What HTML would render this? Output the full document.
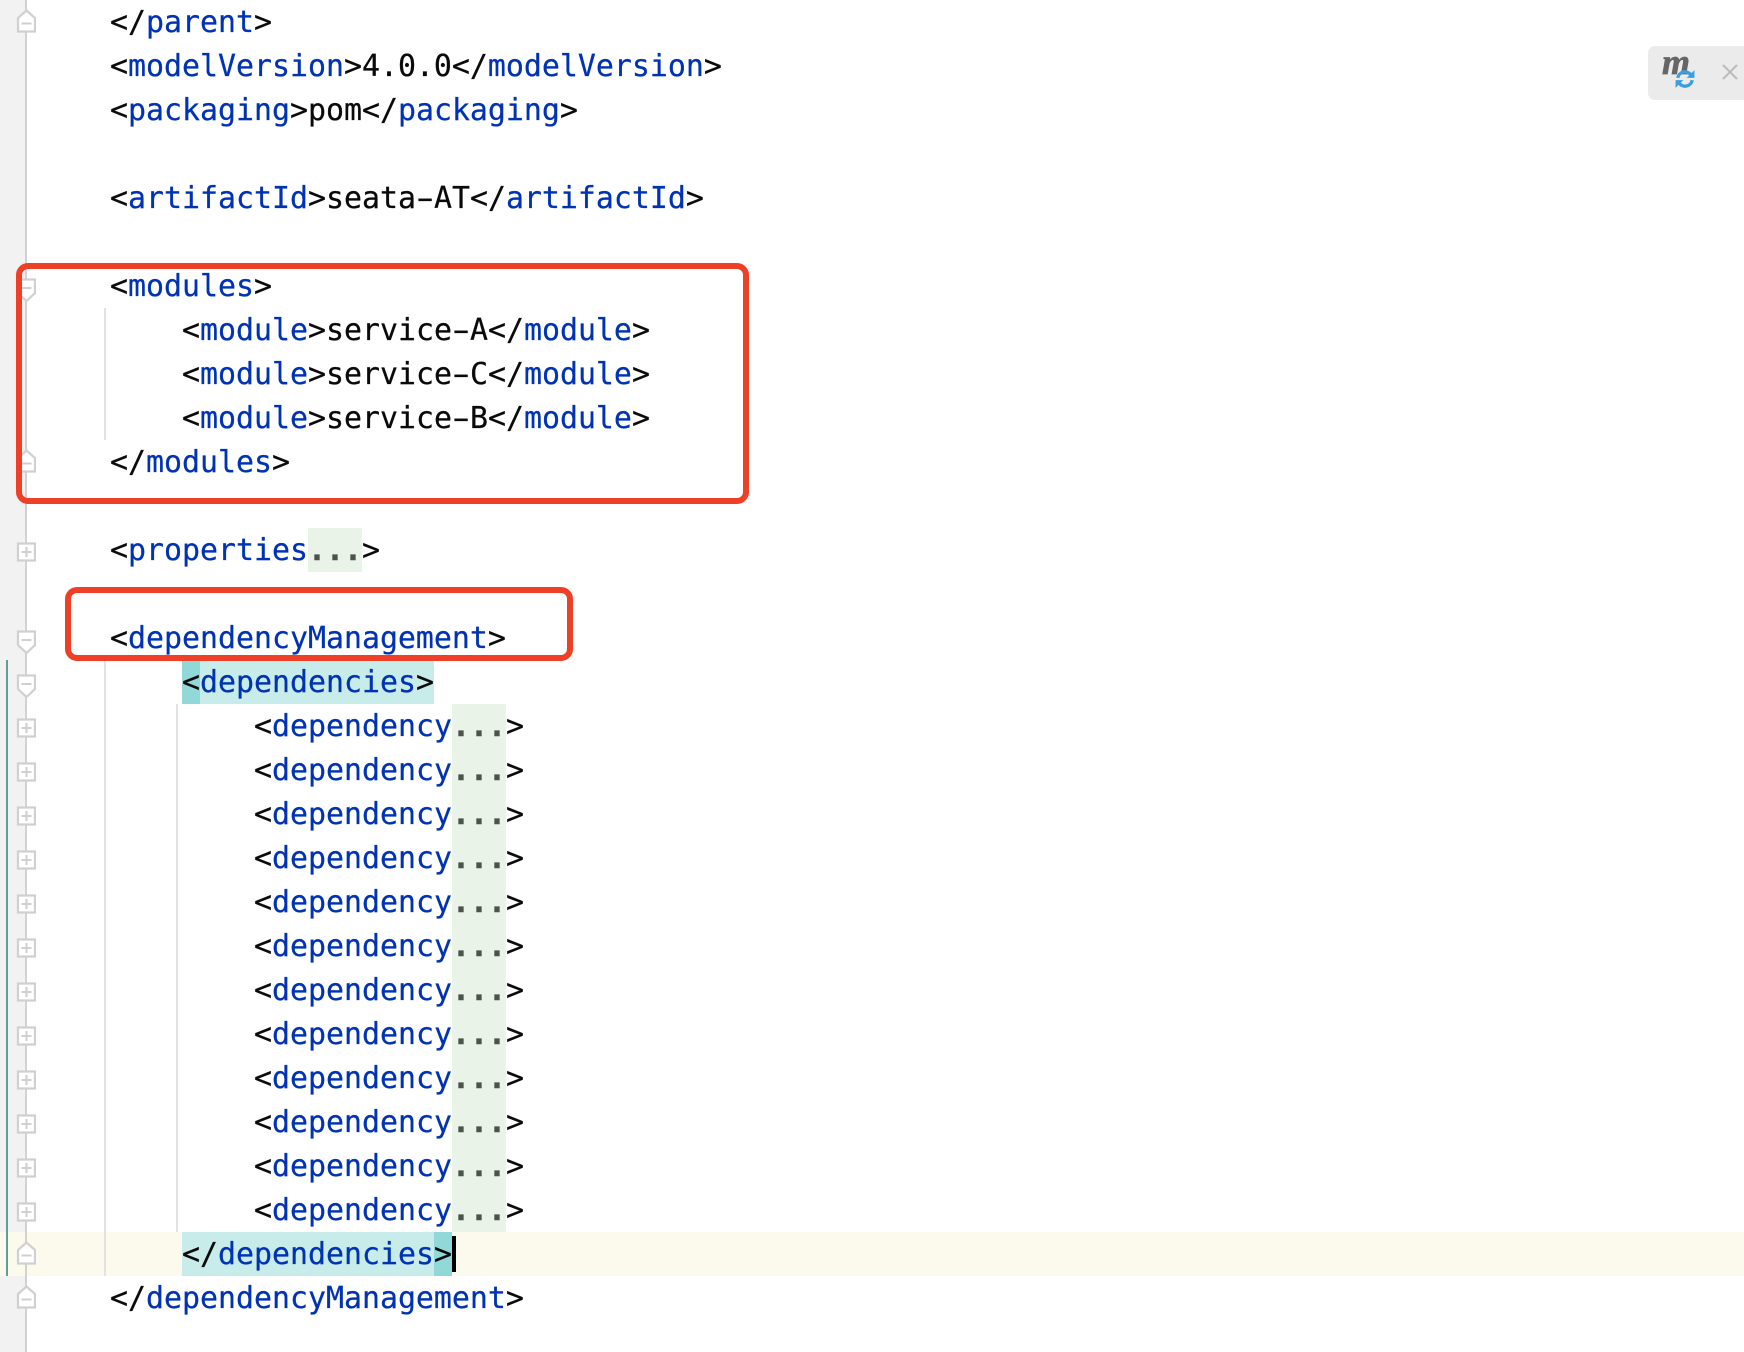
<!DOCTYPE html>
<html><head><meta charset="utf-8"><style>
html,body{margin:0;padding:0;background:#fff;width:1744px;height:1352px;overflow:hidden}
#g{position:absolute;left:0;top:0;width:25px;height:1352px;background:#f2f2f2}
#l{position:absolute;left:25px;top:0;width:2px;height:1352px;background:#d2d2d2;z-index:2}
.b{position:absolute}
.r{position:absolute;left:110px;height:44px;margin-top:1px;font:29.9px/44px "DejaVu Sans Mono","Liberation Mono",monospace;color:#0a0a0a;white-space:pre;z-index:4;-webkit-text-stroke:.25px currentColor}
.r b{font-weight:normal;color:#0033b3}
.r i{font-style:normal;font-weight:bold;color:#4a554a;-webkit-text-stroke:.5px #4a554a}
.r u{text-decoration:none;display:inline-block;transform:scaleX(1.7)}
.i1{left:182px}.i2{left:254px}
.g{position:absolute;width:2px;background:#e2e2e2;z-index:1}
.f{position:absolute;background:#e9f3e8;width:54px;height:44px;z-index:1}
svg.m{position:absolute;left:15.500px;width:20px;height:44px;z-index:3}
.box{position:absolute;border:6px solid #ee4027;border-radius:12px;box-sizing:border-box;z-index:5}
</style></head><body>
<svg width="0" height="0" style="position:absolute"><defs>
<symbol id="p" viewBox="0 0 20 44"><path fill="#fff" stroke="#d0d0d0" stroke-width="2.200" d="M2 15.500H19V32.500H2Z"/><path fill="none" stroke="#d0d0d0" stroke-width="2" d="M10.500 19V29M5.500 24H15.500"/></symbol>
<symbol id="e" viewBox="0 0 20 44"><path fill="#fff" stroke="#d0d0d0" stroke-width="2.200" d="M2 31.500V18L10.500 10.500L19 18V31.500Z"/><path fill="none" stroke="#d0d0d0" stroke-width="2" d="M5.500 23.500H15.500"/></symbol>
<symbol id="s" viewBox="0 0 20 44"><path fill="#fff" stroke="#d0d0d0" stroke-width="2.200" d="M2 15.500V29L10.500 37L19 29V15.500Z"/><path fill="none" stroke="#d0d0d0" stroke-width="2" d="M5.500 24H15.500"/></symbol>
</defs></svg>
<div id="g"></div>
<div class="b" style="left:0;top:1232px;width:1744px;height:44px;background:#fbfaed"></div>
<div id="l"></div>
<div class="b" style="left:6px;top:660px;width:2px;height:616px;background:#5f9e9a;z-index:2"></div>
<div class="g" style="left:104px;top:308px;height:132px"></div>
<div class="g" style="left:104px;top:660px;height:616px"></div>
<div class="g" style="left:176px;top:704px;height:528px"></div>

<div class="b" style="left:182px;top:660px;width:252px;height:44px;background:#c8ecea"></div>
<div class="b" style="left:182px;top:660px;width:18px;height:44px;background:#91d8d8"></div>
<div class="b" style="left:182px;top:1232px;width:270px;height:44px;background:#c8ecea"></div>
<div class="b" style="left:434px;top:1232px;width:18px;height:44px;background:#91d8d8"></div>
<div class="b" style="left:452px;top:1236px;width:4px;height:36px;background:#000;z-index:6"></div>

<div class="f" style="left:308px;top:528px"></div>
<div class="f" style="left:452px;top:704px;height:528px"></div>

<svg class="m" style="top:0"><use href="#e"/></svg>
<svg class="m" style="top:264px"><use href="#s"/></svg>
<svg class="m" style="top:440px"><use href="#e"/></svg>
<svg class="m" style="top:528px"><use href="#p"/></svg>
<svg class="m" style="top:616px"><use href="#s"/></svg>
<svg class="m" style="top:660px"><use href="#s"/></svg>
<svg class="m" style="top:704px"><use href="#p"/></svg>
<svg class="m" style="top:748px"><use href="#p"/></svg>
<svg class="m" style="top:792px"><use href="#p"/></svg>
<svg class="m" style="top:836px"><use href="#p"/></svg>
<svg class="m" style="top:880px"><use href="#p"/></svg>
<svg class="m" style="top:924px"><use href="#p"/></svg>
<svg class="m" style="top:968px"><use href="#p"/></svg>
<svg class="m" style="top:1012px"><use href="#p"/></svg>
<svg class="m" style="top:1056px"><use href="#p"/></svg>
<svg class="m" style="top:1100px"><use href="#p"/></svg>
<svg class="m" style="top:1144px"><use href="#p"/></svg>
<svg class="m" style="top:1188px"><use href="#p"/></svg>
<svg class="m" style="top:1232px"><use href="#e"/></svg>
<svg class="m" style="top:1276px"><use href="#e"/></svg>

<div class="r" style="top:0">&lt;/<b>parent</b>&gt;</div>
<div class="r" style="top:44px">&lt;<b>modelVersion</b>&gt;4.0.0&lt;/<b>modelVersion</b>&gt;</div>
<div class="r" style="top:88px">&lt;<b>packaging</b>&gt;pom&lt;/<b>packaging</b>&gt;</div>
<div class="r" style="top:176px">&lt;<b>artifactId</b>&gt;seata<u>-</u>AT&lt;/<b>artifactId</b>&gt;</div>
<div class="r" style="top:264px">&lt;<b>modules</b>&gt;</div>
<div class="r i1" style="top:308px">&lt;<b>module</b>&gt;service<u>-</u>A&lt;/<b>module</b>&gt;</div>
<div class="r i1" style="top:352px">&lt;<b>module</b>&gt;service<u>-</u>C&lt;/<b>module</b>&gt;</div>
<div class="r i1" style="top:396px">&lt;<b>module</b>&gt;service<u>-</u>B&lt;/<b>module</b>&gt;</div>
<div class="r" style="top:440px">&lt;/<b>modules</b>&gt;</div>
<div class="r" style="top:528px">&lt;<b>properties</b><i>...</i>&gt;</div>
<div class="r" style="top:616px">&lt;<b>dependencyManagement</b>&gt;</div>
<div class="r i1" style="top:660px">&lt;<b>dependencies</b>&gt;</div>
<div class="r i2" style="top:704px">&lt;<b>dependency</b><i>...</i>&gt;</div>
<div class="r i2" style="top:748px">&lt;<b>dependency</b><i>...</i>&gt;</div>
<div class="r i2" style="top:792px">&lt;<b>dependency</b><i>...</i>&gt;</div>
<div class="r i2" style="top:836px">&lt;<b>dependency</b><i>...</i>&gt;</div>
<div class="r i2" style="top:880px">&lt;<b>dependency</b><i>...</i>&gt;</div>
<div class="r i2" style="top:924px">&lt;<b>dependency</b><i>...</i>&gt;</div>
<div class="r i2" style="top:968px">&lt;<b>dependency</b><i>...</i>&gt;</div>
<div class="r i2" style="top:1012px">&lt;<b>dependency</b><i>...</i>&gt;</div>
<div class="r i2" style="top:1056px">&lt;<b>dependency</b><i>...</i>&gt;</div>
<div class="r i2" style="top:1100px">&lt;<b>dependency</b><i>...</i>&gt;</div>
<div class="r i2" style="top:1144px">&lt;<b>dependency</b><i>...</i>&gt;</div>
<div class="r i2" style="top:1188px">&lt;<b>dependency</b><i>...</i>&gt;</div>
<div class="r i1" style="top:1232px">&lt;/<b>dependencies</b>&gt;</div>
<div class="r" style="top:1276px">&lt;/<b>dependencyManagement</b>&gt;</div>

<div class="box" style="left:16px;top:263px;width:733px;height:241px"></div>
<div class="box" style="left:65px;top:587px;width:508px;height:74px"></div>

<div class="b" style="left:1648px;top:46px;width:96px;height:54px;background:#ebebeb;border-radius:7px 0 0 7px"></div>
<div class="b" style="left:1662px;top:42px;font:italic bold 36px/40px 'Liberation Serif',serif;color:#666;-webkit-text-stroke:.7px #666">m</div>
<svg class="b" style="left:1675px;top:69px" width="20" height="20" viewBox="0 0 18 18" fill="none" stroke="#3a9fdc" stroke-width="3">
<path d="M2.500 8A6.500 6.500 0 0 1 14 5"/><path d="M15.500 10A6.500 6.500 0 0 1 4 13"/>
<path d="M17.500 1V8H10.500Z" stroke="none" fill="#3a9fdc"/><path d="M0.500 17V10H7.500Z" stroke="none" fill="#3a9fdc"/></svg>
<svg class="b" style="left:1722px;top:64px" width="16" height="16" viewBox="0 0 16 16" stroke="#bbb" stroke-width="2"><path d="M1 1L15 15M15 1L1 15"/></svg>
</body></html>
